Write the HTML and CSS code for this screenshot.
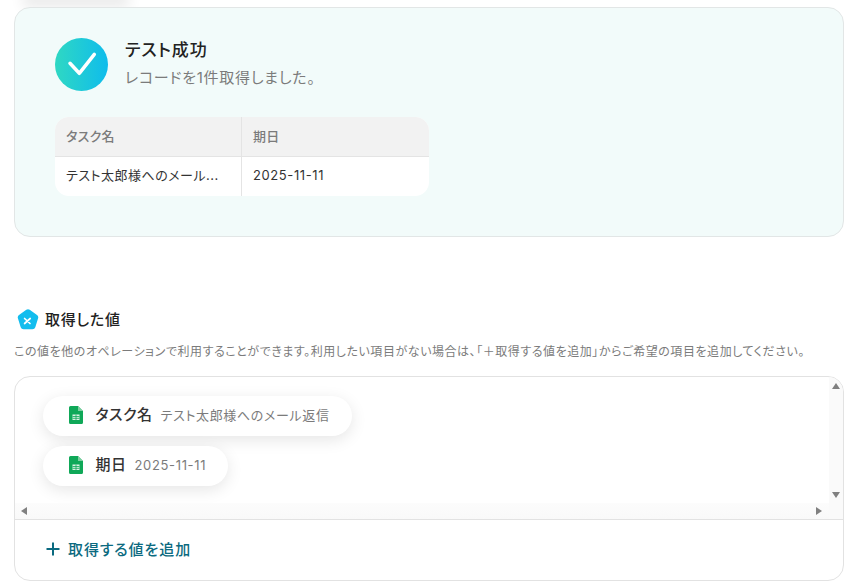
FILE: index.html
```html
<!DOCTYPE html>
<html lang="ja">
<head>
<meta charset="utf-8">
<title>テスト成功</title>
<link rel="stylesheet" href="styles.css">
</head>
<body>
<div class="top-shadow"></div>
<main class="page">
  <section class="result-card">
    <div class="result-head">
      <svg class="check" width="53" height="53" viewBox="0 0 53 53">
        <defs><linearGradient id="g" x1="0" y1="0" x2="1" y2="0"><stop offset="0" stop-color="#2fd8c3"/><stop offset="1" stop-color="#0fbcec"/></linearGradient></defs>
        <circle cx="26.5" cy="26.5" r="26.5" fill="url(#g)"/>
        <path d="M15 25.300l9.300 10L39.300 16.300" fill="none" stroke="#fff" stroke-width="3.500" stroke-linecap="round" stroke-linejoin="round"/>
      </svg>
      <div class="result-text">
        <h2 class="result-title">テスト成功</h2>
        <p class="result-sub">レコードを1件取得しました。</p>
      </div>
    </div>
    <table class="result-table">
      <thead><tr><th class="col-a">タスク名</th><th class="col-b">期日</th></tr></thead>
      <tbody><tr><td class="col-a">テスト太郎様へのメール...</td><td class="col-b">2025-11-11</td></tr></tbody>
    </table>
  </section>

  <section class="values">
    <div class="values-head">
      <svg width="22" height="22" viewBox="0 0 22 22">
        <path d="M9.300.8a3 3 0 0 1 3.400 0l7.300 5.200a3 3 0 0 1 1.100 3.300l-2.800 8.900a3 3 0 0 1-2.900 2.100H6.600a3 3 0 0 1-2.900-2.100L.900 9.300A3 3 0 0 1 2 6z" fill="#13bdee"/>
        <path d="M7.600 9.500l5.400 5M13.200 9.500l-5.600 5" stroke="#fff" stroke-width="1.700" stroke-linecap="round"/>
      </svg>
      <h3 class="values-title">取得した値</h3>
    </div>
    <p class="values-desc">この値を他のオペレーションで利用することができます。利用したい項目がない場合は、「＋取得する値を追加」からご希望の項目を追加してください。</p>
    <div class="values-box">
      <div class="scroller">
        <div class="pane">
          <div class="chip">
            <svg class="sheet" width="14" height="18" viewBox="0 0 14 18"><path d="M1.500 0H9l5 5v11.500a1.500 1.500 0 0 1-1.500 1.500h-11A1.500 1.500 0 0 1 0 16.500v-15A1.500 1.500 0 0 1 1.500 0z" fill="#0fa858"/><path d="M9 0l5 5H9z" fill="#7ccf9f"/><path d="M3.500 8.500h7v5.500h-7z" fill="#d9f1e3"/><path d="M3.500 10.500h7M3.500 12.300h7M7 8.500v5.500" stroke="#0fa858" stroke-width=".8"/></svg>
            <span class="chip-key">タスク名</span><span class="chip-val">テスト太郎様へのメール返信</span>
          </div>
          <div class="chip">
            <svg class="sheet" width="14" height="18" viewBox="0 0 14 18"><path d="M1.500 0H9l5 5v11.500a1.500 1.500 0 0 1-1.500 1.500h-11A1.500 1.500 0 0 1 0 16.500v-15A1.500 1.500 0 0 1 1.500 0z" fill="#0fa858"/><path d="M9 0l5 5H9z" fill="#7ccf9f"/><path d="M3.500 8.500h7v5.500h-7z" fill="#d9f1e3"/><path d="M3.500 10.500h7M3.500 12.300h7M7 8.500v5.500" stroke="#0fa858" stroke-width=".8"/></svg>
            <span class="chip-key">期日</span><span class="chip-val">2025-11-11</span>
          </div>
        </div>
        <div class="vbar"><i class="arr arr-up"></i><i class="arr arr-down"></i></div>
        <div class="hbar"><i class="arr arr-left"></i><i class="arr arr-right"></i></div>
      </div>
      <div class="add-row">
        <svg width="16" height="16" viewBox="0 0 16 16"><path d="M8 1.500v13M1.500 8h13" stroke="#0b6a80" stroke-width="2"/></svg>
        <span class="add-label">取得する値を追加</span>
      </div>
    </div>
  </section>
</main>
</body>
</html>
```
FILE: styles.css
```css
* { box-sizing: border-box; }
html, body { margin: 0; padding: 0; background: #fff; }
body {
  width: 856px;
  height: 588px;
  overflow: hidden;
  font-family: Inter, "Noto Sans CJK JP", sans-serif;
  font-feature-settings: "palt";
  color: #222;
}
.top-shadow {
  height: 0;
  width: 96px;
  margin-left: 28px;
  box-shadow: 0 0 14px 5px rgba(0, 0, 0, .12);
}
.page { padding: 7px 12px 0 14px; }

.result-card {
  height: 230px;
  background: #f2fbfa;
  border: 1px solid #e2e6e6;
  border-radius: 16px;
  padding: 30px 40px 0;
}
.result-head { display: flex; gap: 17px; }
.check { flex: none; }
.result-title { margin: 0; font-size: 17px; line-height: 24px; font-weight: 500; letter-spacing: 1px; color: #222; }
.result-sub { margin: 4px 0 0; font-size: 15px; line-height: 24px; letter-spacing: .75px; color: #7b7b7b; font-weight: 400; }

.result-table {
  margin-top: 26px;
  width: 374px;
  border-collapse: separate;
  border-spacing: 0;
  table-layout: fixed;
  border-radius: 14px;
  overflow: hidden;
  background: #fff;
  font-size: 13px;
}
.result-table .col-a { width: 187px; border-right: 1px solid #e4e4e4; }
.result-table th {
  height: 40px;
  background: #f2f2f2;
  border-bottom: 1px solid #e4e4e4;
  text-align: left;
  font-weight: 500;
  letter-spacing: .3px;
  color: #7b7b7b;
  padding: 0 11px 2px;
}
.result-table td { height: 39px; padding: 0 11px 3px; color: #333; white-space: nowrap; letter-spacing: .5px; }
.result-table td.col-a { padding-bottom: 5px; }
.result-table td.col-b { letter-spacing: .6px; }

.values { margin-top: 70px; }
.values-head { display: flex; align-items: center; gap: 6px; margin-left: 3px; height: 26px; }
.values-title { margin: 0 0 4px; font-size: 15px; font-weight: 500; letter-spacing: .75px; color: #222; }
.values-desc { margin: 10px 0 0; font-size: 12px; line-height: 18px; letter-spacing: .55px; color: #7b7b7b; white-space: nowrap; }
.values-box {
  margin-top: 15px;
  height: 205px;
  background: #fff;
  border: 1px solid #e2e2e2;
  border-radius: 16px;
  overflow: hidden;
}
.scroller {
  display: grid;
  grid-template-columns: 1fr 14px;
  grid-template-rows: 126px 16px;
  height: 143px;
  border-bottom: 1px solid #e2e2e2;
}
.pane { padding: 19px 0 0 28px; display: flex; flex-direction: column; gap: 10px; align-items: flex-start; }
.chip {
  display: flex;
  align-items: center;
  height: 40px;
  padding: 0 22px 2px 26px;
  background: #fff;
  border-radius: 20px;
  box-shadow: 0 4px 16px rgba(0, 0, 0, .1);
}
.sheet { flex: none; margin-right: 12px; }
.chip-key { font-size: 15px; font-weight: 500; letter-spacing: .5px; color: #333; margin: 0 8px 3px .5px; }
.chip-val { font-size: 13px; letter-spacing: .65px; color: #7b7b7b; margin-bottom: 1px; }
.vbar {
  grid-row: 1 / 3;
  grid-column: 2;
  background: #fafafa;
  display: flex;
  flex-direction: column;
  justify-content: space-between;
  align-items: center;
  padding: 6px 0 21px;
}
.hbar {
  grid-row: 2;
  grid-column: 1;
  background: linear-gradient(#fcfcfc, #f9f9f9);
  display: flex;
  justify-content: space-between;
  align-items: center;
  padding: 0 7px 0 6px;
}
.arr { display: block; width: 0; height: 0; border-style: solid; border-color: transparent; }
.arr-up { border-width: 0 4px 6px; border-bottom-color: #808080; }
.arr-down { border-width: 6px 4px 0; border-top-color: #808080; }
.arr-left { border-width: 4px 6px 4px 0; border-right-color: #808080; }
.arr-right { border-width: 4px 0 4px 6px; border-left-color: #808080; }

.add-row { display: flex; align-items: center; gap: 7px; height: 61px; padding: 0 0 4px 30px; }
.add-label { font-size: 15px; font-weight: 500; letter-spacing: .9px; color: #0b6a80; }
```
